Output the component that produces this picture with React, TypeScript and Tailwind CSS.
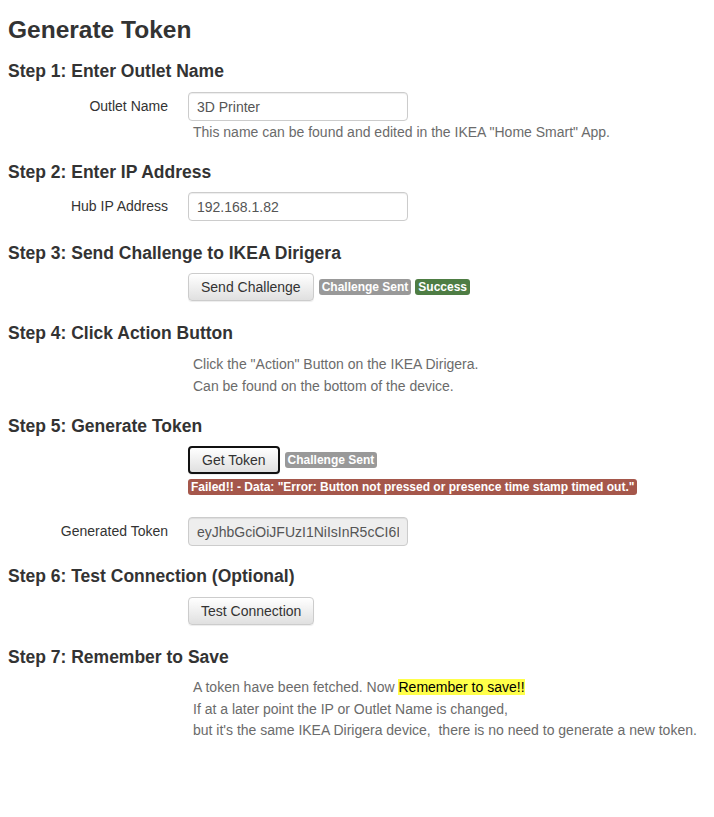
import React from 'react'

const font = { fontFamily: '"Liberation Sans", Arial, sans-serif' }

function Heading({ children, className }: { children: React.ReactNode; className: string }) {
  return (
    <h4 className={`text-[17.5px] font-bold leading-[20px] text-[#333] ${className}`}>
      {children}
    </h4>
  )
}

function Row({ label, children }: { label?: string; children: React.ReactNode }) {
  return (
    <div className="flex">
      <div className="w-[160px] shrink-0 text-right text-[14px] leading-[29px] text-[#333]">
        {label}
      </div>
      <div className="ml-[20px] flex-1 min-w-0">{children}</div>
    </div>
  )
}

function Input({ value, readOnly }: { value: string; readOnly?: boolean }) {
  return (
    <input
      value={value}
      readOnly
      className={`block h-[29px] w-[220px] rounded-[4px] border border-[#ccc] px-[8px] text-[14px] text-[#555] shadow-[inset_0_1px_1px_rgba(0,0,0,0.075)] outline-none ${
        readOnly ? 'bg-[#eee]' : 'bg-white'
      }`}
      style={font}
    />
  )
}

function Btn({ children, focused }: { children: React.ReactNode; focused?: boolean }) {
  return (
    <button
      className={`h-[28px] rounded-[4px] bg-gradient-to-b from-white to-[#e0e0e0] px-[12px] text-[14px] leading-[20px] text-[#333] shadow-[inset_0_1px_0_rgba(255,255,255,0.15),0_1px_1px_rgba(0,0,0,0.075)] ${
        focused ? 'border-2 border-[#111] px-[11px]' : 'border border-[#ccc]'
      }`}
      style={font}
    >
      {children}
    </button>
  )
}

function Badge({ color, children }: { color: string; children: React.ReactNode }) {
  return (
    <span
      className={`inline-block h-[16px] rounded-[3px] px-[3px] text-[12px] font-bold leading-[16px] text-white whitespace-nowrap ${color}`}
    >
      {children}
    </span>
  )
}

export default function App() {
  return (
    <div className="min-h-screen bg-white px-[8px] pt-[16px] text-[14px]" style={font}>
      <h2 className="text-[24.5px] font-bold leading-[28px] text-[#333]">Generate Token</h2>

      {/* STEP 1 */}
      <Heading className="mt-[17px] mb-[11px]">Step 1: Enter Outlet Name</Heading>
      <Row label="Outlet Name">
        <Input value="3D Printer" />
        <p className="mt-[1px] pl-[5px] text-[14px] leading-[20px] text-[#6b6b6b]">
          This name can be found and edited in the IKEA "Home Smart" App.
        </p>
      </Row>

      {/* STEP 2 */}
      <Heading className="mt-[20px] mb-[10px]">Step 2: Enter IP Address</Heading>
      <Row label="Hub IP Address">
        <Input value="192.168.1.82" />
      </Row>

      {/* STEP 3 */}
      <Heading className="mt-[22px] mb-[10px]">Step 3: Send Challenge to IKEA Dirigera</Heading>
      <Row>
        <div className="flex items-center gap-[5px]">
          <Btn>Send Challenge</Btn>
          <div className="flex gap-[4px]">
            <Badge color="bg-[#999]">Challenge Sent</Badge>
            <Badge color="bg-[#4e7d44]">Success</Badge>
          </div>
        </div>
      </Row>

      {/* STEP 4 */}
      <Heading className="mt-[22px] mb-[11px]">Step 4: Click Action Button</Heading>
      <Row>
        <div className="pl-[5px] text-[14px] leading-[21.5px] text-[#6b6b6b]">
          <p>Click the "Action" Button on the IKEA Dirigera.</p>
          <p>Can be found on the bottom of the device.</p>
        </div>
      </Row>

      {/* STEP 5 */}
      <Heading className="mt-[19px] mb-[10px]">Step 5: Generate Token</Heading>
      <Row>
        <div className="flex items-center gap-[5px]">
          <Btn focused>Get Token</Btn>
          <Badge color="bg-[#999]">Challenge Sent</Badge>
        </div>
        <div className="mt-[5px] flex">
          <Badge color="bg-[#a5574b]">
            Failed!! - Data: "Error: Button not pressed or presence time stamp timed out."
          </Badge>
        </div>
      </Row>
      <div className="mt-[22px]">
        <Row label="Generated Token">
          <Input value="eyJhbGciOiJFUzI1NiIsInR5cCI6IkpXVCJ9.eyJpc3MiOiI" readOnly />
        </Row>
      </div>

      {/* STEP 6 */}
      <Heading className="mt-[20px] mb-[11px]">Step 6: Test Connection (Optional)</Heading>
      <Row>
        <Btn>Test Connection</Btn>
      </Row>

      {/* STEP 7 */}
      <Heading className="mt-[22px] mb-[10px]">Step 7: Remember to Save</Heading>
      <Row>
        <div className="pl-[5px] text-[14px] leading-[21.5px] text-[#6b6b6b]">
          <p>
            A token have been fetched. Now{' '}
            <mark className="bg-[#ffff4a] text-black">Remember to save!!</mark>
          </p>
          <p>If at a later point the IP or Outlet Name is changed,</p>
          <p>but it's the same IKEA Dirigera device, &nbsp;there is no need to generate a new token.</p>
        </div>
      </Row>
    </div>
  )
}
